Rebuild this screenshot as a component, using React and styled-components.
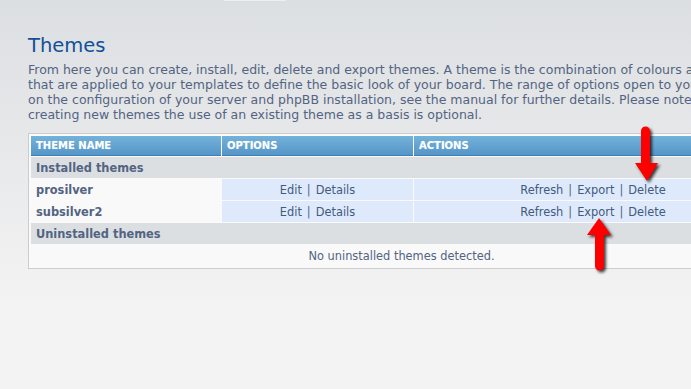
import React from "react";
import styled, { createGlobalStyle } from "styled-components";

const GlobalStyle = createGlobalStyle`
  html, body { margin: 0; padding: 0; overflow: hidden; }
  body { font-family: "DejaVu Sans", Verdana, sans-serif; }
`;

const Page = styled.div`
  position: relative;
  width: 691px;
  height: 389px;
  overflow: hidden;
  background: linear-gradient(#dcdfe2 0px, #e6e7e9 130px, #f3f3f3 300px, #f3f3f3 389px);
`;

const TopTab = styled.div`
  margin-left: 224px;
  width: 62px;
  height: 1px;
  background: #eceef0;
`;

const Main = styled.div`
  padding: 33px 0 0 28px;
  width: 760px;
`;

const Title = styled.h1`
  margin: 0;
  font-size: 19.5px;
  line-height: 24px;
  font-weight: normal;
  color: #115098;
`;

const Intro = styled.p`
  margin: 4px 0 0 0;
  font-size: 12.5px;
  line-height: 15px;
  color: #536482;
  white-space: nowrap;
`;

const Panel = styled.div`
  margin-top: 11px;
  width: 743px;
  border: 1px solid #cccccc;
  padding: 1px;
  background: #fafafa;
`;

const Table = styled.table`
  width: 100%;
  border-collapse: separate;
  border-spacing: 1px;
  table-layout: fixed;
  font-size: 11.4px;
  color: #536482;
`;

const Th = styled.th`
  height: 19px;
  padding: 0 5px;
  text-align: left;
  font-size: 10px;
  font-weight: bold;
  color: #ffffff;
  text-transform: uppercase;
  background: linear-gradient(#74b2da, #5596c8);
  border-bottom: 1px solid #3f80b4;
  text-shadow: 0 0 1px rgba(255, 255, 255, 0.35);
`;

const CatCell = styled.td`
  height: 21px;
  padding: 0 5px;
  font-weight: bold;
  background: #dcdfe2;
`;

const Cell = styled.td`
  height: 21px;
  padding: 0 5px;
  text-align: ${(p) => p.$align || "left"};
  font-weight: ${(p) => (p.$bold ? "bold" : "normal")};
  background: ${(p) => (p.$alt ? "#deeafb" : "#f9f9f9")};
`;

const Link = styled.a`
  color: #435a7e;
  text-decoration: none;
`;

const Sep = styled.span`
  color: #536482;
  margin: 0 5px;
`;

const Arrows = styled.svg`
  position: absolute;
  left: 0;
  top: 0;
  width: 691px;
  height: 389px;
  pointer-events: none;
  filter: drop-shadow(2px 2px 1.5px rgba(0, 0, 0, 0.75));
`;

const themes = ["prosilver", "subsilver2"];

function Links({ items }) {
  return items.map((t, i) => (
    <React.Fragment key={t}>
      {i > 0 && <Sep>|</Sep>}
      <Link href="#">{t}</Link>
    </React.Fragment>
  ));
}

export default function App() {
  return (
    <>
      <GlobalStyle />
      <Page>
        <TopTab />
        <Main>
          <Title>Themes</Title>
          <Intro>
            From here you can create, install, edit, delete and export themes. A theme is the combination of colours and images
            <br />
            that are applied to your templates to define the basic look of your board. The range of options open to you depends
            <br />
            on the configuration of your server and phpBB installation, see the manual for further details. Please note that when
            <br />
            creating new themes the use of an existing theme as a basis is optional.
          </Intro>
          <Panel>
            <Table>
              <colgroup>
                <col style={{ width: 190 }} />
                <col style={{ width: 191 }} />
                <col />
              </colgroup>
              <thead>
                <tr>
                  <Th>Theme name</Th>
                  <Th>Options</Th>
                  <Th>Actions</Th>
                </tr>
              </thead>
              <tbody>
                <tr>
                  <CatCell colSpan={3}>Installed themes</CatCell>
                </tr>
                {themes.map((t) => (
                  <tr key={t}>
                    <Cell $bold>{t}</Cell>
                    <Cell $alt $align="center">
                      <Links items={["Edit", "Details"]} />
                    </Cell>
                    <Cell $alt $align="center">
                      <Links items={["Refresh", "Export", "Delete"]} />
                    </Cell>
                  </tr>
                ))}
                <tr>
                  <CatCell colSpan={3}>Uninstalled themes</CatCell>
                </tr>
                <tr>
                  <Cell colSpan={3} $align="center">No uninstalled themes detected.</Cell>
                </tr>
              </tbody>
            </Table>
          </Panel>
        </Main>
        <Arrows viewBox="0 0 691 389">
          <path
            d="M641 131 A4.5 4.5 0 0 1 650 131 L650 163 L658 163 L647 181 L635 163 L641 163 Z"
            fill="#ff0000"
          />
          <path
            d="M595 266 A4.5 4.5 0 0 0 604 266 L604 235 L611 235 L599 218 L587 235 L595 235 Z"
            fill="#ff0000"
          />
        </Arrows>
      </Page>
    </>
  );
}
